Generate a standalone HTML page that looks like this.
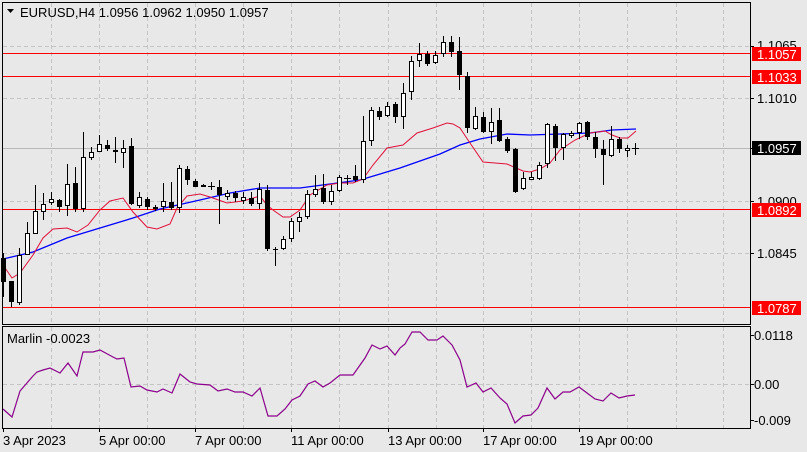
<!DOCTYPE html>
<html><head><meta charset="utf-8"><style>
body{margin:0;width:807px;height:452px;background:#e8e8e8;overflow:hidden;font-family:Tahoma,"Liberation Sans","DejaVu Sans",sans-serif}
svg{position:absolute;left:0;top:0}
text{font-family:"Liberation Sans","DejaVu Sans",sans-serif;font-size:13px;fill:#000}
</style></head><body>
<svg width="807" height="452" viewBox="0 0 807 452" shape-rendering="crispEdges">
<rect x="0" y="0" width="807" height="452" fill="#e8e8e8"/>
<g stroke="#c4c4c4" stroke-dasharray="4,3" stroke-width="1">
<path d="M3 46.5H750M3 98.5H750M3 201.5H750M3 253.5H750"/>
<path d="M51.5 3V324M99.5 3V324M147.5 3V324M195.5 3V324M243.5 3V324M291.5 3V324M339.5 3V324M388.5 3V324M436.5 3V324M483.5 3V324M531.5 3V324M579.5 3V324M627.5 3V324M676.5 3V324M723.5 3V324"/>
<path d="M51.5 327V428M99.5 327V428M147.5 327V428M195.5 327V428M243.5 327V428M291.5 327V428M339.5 327V428M388.5 327V428M436.5 327V428M483.5 327V428M531.5 327V428M579.5 327V428M627.5 327V428M676.5 327V428M723.5 327V428M3 384.5H750"/>
</g>
<path d="M3 148.5H750" stroke="#b8b8b8"/>
<path d="M3 53.5H750M3 76.5H750M3 209.5H750M3 307.5H750" stroke="#ff0000"/>
<polyline fill="none" stroke="#0000ff" stroke-width="1.3" shape-rendering="auto" points="3,259 33,252 67,238 100,228 133,218 160,209 200,200 230,193 260,188 300,188 330,184 360,180 400,168 440,154 460,145 480,139 507,134 530,135 590,133 612,130 636,129"/>
<polyline fill="none" stroke="#e0103a" stroke-width="1" shape-rendering="auto" points="3,265 12,278 20,273 33,255 43,238 53,229 67,228 77,232 88,225 100,210 110,201 123,198 133,212 147,227 157,229 170,224 177,208 187,196 200,194 210,197 227,203 243,201 260,196 267,205 273,210 283,217 290,217 300,210 310,195 327,185 340,183 353,183 363,179 373,165 387,148 403,145 417,133 433,128 447,123 453,124 460,128 470,143 483,162 507,164 523,171 530,172 540,169 550,163 560,150 575,140 590,133 605,131 612,135 620,138 628,138 636,131"/>
<path stroke="#000" fill="none" d="M3.5 253V297M11.5 281V307M19.5 248V305M27.5 222V255M35.5 185V234M43.5 193V220M51.5 192V205M59.5 199V212M67.5 164V216M75.5 167V212M83.5 132V212M91.5 147V160M99.5 135V152M107.5 140V151M115.5 137V163M123.5 140V168M131.5 138V205M139.5 192V208M147.5 197V210M155.5 205V211M163.5 183V212M171.5 182V210M179.5 165V213M187.5 166V185M195.5 179V187M203.5 184V187M211.5 182V190M219.5 180V224M227.5 190V200M235.5 191V202M243.5 192V204M251.5 192V206M259.5 183V209M267.5 185V251M275.5 247V266M283.5 236V250M291.5 218V242M299.5 212V232M307.5 190V219M315.5 175V197M323.5 174V204M331.5 185V205M339.5 175V192M347.5 175V185M355.5 165V182M363.5 116V183M371.5 107V146M379.5 107V120M387.5 102V117M395.5 102V123M403.5 83V129M411.5 56V100M419.5 43V67M427.5 51V66M435.5 51V64M443.5 36V57M451.5 36V57M459.5 37V90M467.5 72V133M475.5 107V130M483.5 112V133M491.5 108V144M499.5 108V142M507.5 137V153M515.5 148V193M523.5 172V190M531.5 172V180M539.5 162V180M547.5 123V168M555.5 124V161M563.5 133V160M571.5 131V138M579.5 122V139M587.5 121V140M595.5 132V158M603.5 140V185M611.5 126V157M619.5 137V153M627.5 145V157M635.5 143V155M208 186.5H215M344 178.5H351M632 148.5H639"/>
<g fill="#000">
<rect x="1" y="258" width="5" height="24"/><rect x="9" y="281" width="5" height="21"/><rect x="57" y="200" width="5" height="7"/><rect x="73" y="183" width="5" height="26"/><rect x="105" y="145" width="5" height="4"/><rect x="113" y="150" width="5" height="2"/><rect x="129" y="146" width="5" height="58"/><rect x="145" y="199" width="5" height="8"/><rect x="153" y="207" width="5" height="2"/><rect x="169" y="202" width="5" height="6"/><rect x="185" y="169" width="5" height="11"/><rect x="193" y="181" width="5" height="6"/><rect x="201" y="185" width="5" height="2"/><rect x="217" y="187" width="5" height="8"/><rect x="233" y="193" width="5" height="5"/><rect x="249" y="198" width="5" height="6"/><rect x="265" y="190" width="5" height="59"/><rect x="273" y="249" width="5" height="1"/><rect x="321" y="188" width="5" height="14"/><rect x="353" y="176" width="5" height="4"/><rect x="377" y="111" width="5" height="6"/><rect x="393" y="104" width="5" height="13"/><rect x="425" y="54" width="5" height="10"/><rect x="449" y="42" width="5" height="10"/><rect x="457" y="51" width="5" height="24"/><rect x="465" y="76" width="5" height="52"/><rect x="481" y="117" width="5" height="15"/><rect x="497" y="120" width="5" height="21"/><rect x="505" y="139" width="5" height="12"/><rect x="513" y="149" width="5" height="43"/><rect x="553" y="126" width="5" height="22"/><rect x="585" y="122" width="5" height="15"/><rect x="593" y="137" width="5" height="12"/><rect x="601" y="149" width="5" height="6"/><rect x="617" y="139" width="5" height="10"/>
</g>
<g fill="#fff" stroke="#000">
<rect x="17.5" y="255.5" width="4" height="47"/><rect x="25.5" y="233.5" width="4" height="21"/><rect x="33.5" y="211.5" width="4" height="22"/><rect x="41.5" y="204.5" width="4" height="7"/><rect x="49.5" y="199.5" width="4" height="3"/><rect x="65.5" y="184.5" width="4" height="21"/><rect x="81.5" y="157.5" width="4" height="51"/><rect x="89.5" y="152.5" width="4" height="5"/><rect x="97.5" y="144.5" width="4" height="7"/><rect x="121.5" y="148.5" width="4" height="4"/><rect x="137.5" y="197.5" width="4" height="8"/><rect x="161.5" y="201.5" width="4" height="5"/><rect x="177.5" y="168.5" width="4" height="39"/><rect x="225.5" y="193.5" width="4" height="3"/><rect x="241.5" y="197.5" width="4" height="3"/><rect x="257.5" y="189.5" width="4" height="14"/><rect x="281.5" y="239.5" width="4" height="9"/><rect x="289.5" y="221.5" width="4" height="17"/><rect x="297.5" y="217.5" width="4" height="4"/><rect x="305.5" y="194.5" width="4" height="22"/><rect x="313.5" y="189.5" width="4" height="5"/><rect x="329.5" y="191.5" width="4" height="10"/><rect x="337.5" y="177.5" width="4" height="13"/><rect x="361.5" y="141.5" width="4" height="38"/><rect x="369.5" y="110.5" width="4" height="30"/><rect x="385.5" y="106.5" width="4" height="9"/><rect x="401.5" y="93.5" width="4" height="23"/><rect x="409.5" y="61.5" width="4" height="30"/><rect x="417.5" y="54.5" width="4" height="6"/><rect x="433.5" y="55.5" width="4" height="7"/><rect x="441.5" y="42.5" width="4" height="11"/><rect x="473.5" y="116.5" width="4" height="12"/><rect x="489.5" y="122.5" width="4" height="9"/><rect x="521.5" y="178.5" width="4" height="10"/><rect x="529.5" y="177.5" width="4" height="2"/><rect x="537.5" y="165.5" width="4" height="13"/><rect x="545.5" y="124.5" width="4" height="39"/><rect x="561.5" y="134.5" width="4" height="13"/><rect x="569.5" y="133.5" width="4" height="2"/><rect x="577.5" y="123.5" width="4" height="9"/><rect x="609.5" y="139.5" width="4" height="16"/><rect x="625.5" y="148.5" width="4" height="2"/>
</g>
<polyline fill="none" stroke="#8b008b" stroke-width="1.2" shape-rendering="auto" points="3,409 12,417 20,391 33,376 37,372 43,370 50,368 60,373 68,363 77,376 83,352 93,352 100,350 113,357 117,359 124,358 131,387 140,386 147,390 157,392 163,389 172,393 180,374 190,382 197,384 210,385 218,391 227,389 235,392 243,392 252,396 260,388 268,416 277,416 285,409 292,400 300,396 308,384 315,381 323,387 330,383 340,375 353,375 365,358 372,345 380,349 387,346 395,355 400,348 405,344 412,332 420,332 428,340 437,340 443,336 452,345 460,360 467,387 476,383 483,392 491,388 500,398 507,404 515,423 523,416 531,415 538,408 547,388 555,399 563,392 570,392 579,387 587,393 595,399 603,401 611,393 619,398 627,396 635,395"/>
<g fill="none" stroke="#000">
<rect x="2.5" y="2.5" width="748" height="322"/>
<rect x="2.5" y="326.5" width="748" height="102"/>
<path d="M750 46.5H754M750 98.5H754M750 148.5H754M750 201.5H754M750 253.5H754M750 335.5H754M750 384.5H754M750 420.5H754M3.5 428V432M99.5 428V432M195.5 428V432M291.5 428V432M388.5 428V432M483.5 428V432M579.5 428V432"/>
</g>
<text x="757" y="50">1.1065</text>
<text x="757" y="103">1.1010</text>
<text x="757" y="206">1.0900</text>
<text x="757" y="258">1.0845</text>
<rect x="752" y="47" width="49" height="14" fill="#ff0000"/><text x="757" y="59" style="fill:#fff">1.1057</text>
<rect x="752" y="70" width="49" height="14" fill="#ff0000"/><text x="757" y="82" style="fill:#fff">1.1033</text>
<rect x="752" y="141" width="49" height="14" fill="#000"/><text x="757" y="153" style="fill:#fff">1.0957</text>
<rect x="752" y="203" width="49" height="14" fill="#ff0000"/><text x="757" y="215" style="fill:#fff">1.0892</text>
<rect x="752" y="301" width="49" height="14" fill="#ff0000"/><text x="757" y="313" style="fill:#fff">1.0787</text>
<text x="754" y="340">0.0118</text>
<text x="754" y="389">0.00</text>
<text x="754" y="425">-0.009</text>
<path d="M7 9H14L10.5 13Z" fill="#000" shape-rendering="auto"/>
<text x="20" y="17">EURUSD,H4  1.0956 1.0962 1.0950 1.0957</text>
<text x="7" y="343">Marlin -0.0023</text>
<text x="3" y="445">3 Apr 2023</text>
<text x="99" y="445">5 Apr 00:00</text>
<text x="195" y="445">7 Apr 00:00</text>
<text x="291" y="445">11 Apr 00:00</text>
<text x="388" y="445">13 Apr 00:00</text>
<text x="483" y="445">17 Apr 00:00</text>
<text x="579" y="445">19 Apr 00:00</text>
</svg>
</body></html>
